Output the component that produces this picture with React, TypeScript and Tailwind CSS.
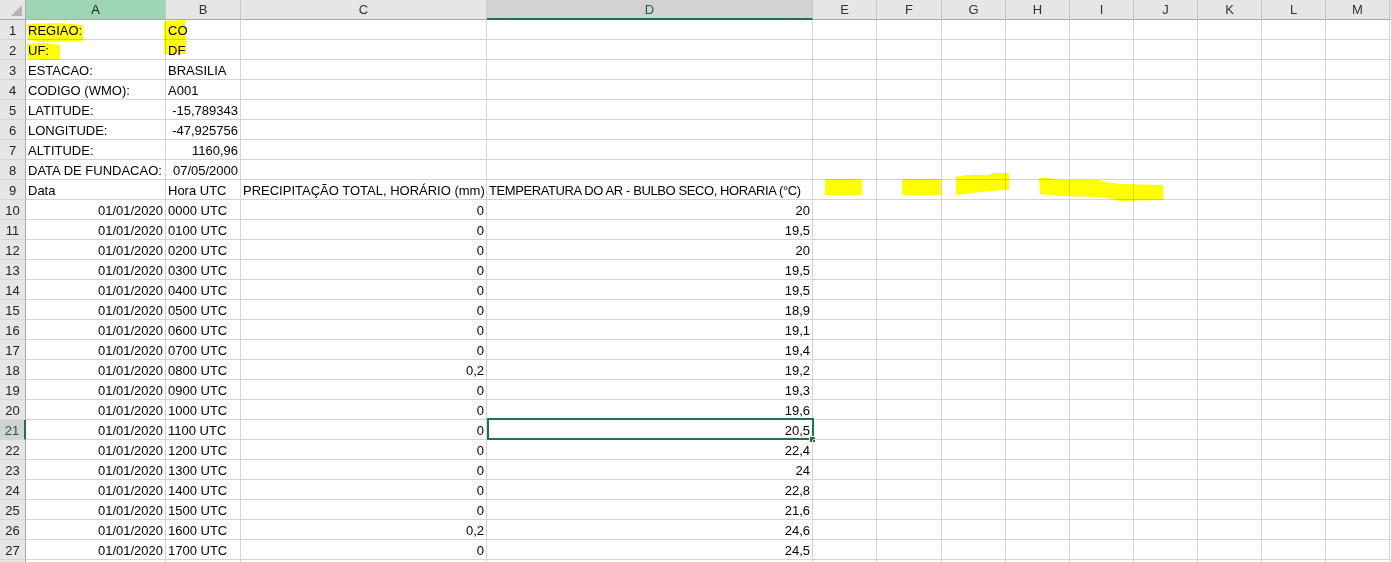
import React from "react";

const cols = ["A", "B", "C", "D", "E", "F", "G", "H", "I", "J", "K", "L", "M"];

type Cell = { t?: string; r?: boolean; s?: string };

const meta: [Cell, Cell][] = [
  [{ t: "REGIAO:" }, { t: "CO" }],
  [{ t: "UF:" }, { t: "DF" }],
  [{ t: "ESTACAO:" }, { t: "BRASILIA" }],
  [{ t: "CODIGO (WMO):" }, { t: "A001" }],
  [{ t: "LATITUDE:" }, { t: "-15,789343", r: true }],
  [{ t: "LONGITUDE:" }, { t: "-47,925756", r: true }],
  [{ t: "ALTITUDE:" }, { t: "1160,96", r: true }],
  [{ t: "DATA DE FUNDACAO:" }, { t: "07/05/2000", r: true }],
];

const data: [string, string, string][] = [
  ["0000", "0", "20"],
  ["0100", "0", "19,5"],
  ["0200", "0", "20"],
  ["0300", "0", "19,5"],
  ["0400", "0", "19,5"],
  ["0500", "0", "18,9"],
  ["0600", "0", "19,1"],
  ["0700", "0", "19,4"],
  ["0800", "0,2", "19,2"],
  ["0900", "0", "19,3"],
  ["1000", "0", "19,6"],
  ["1100", "0", "20,5"],
  ["1200", "0", "22,4"],
  ["1300", "0", "24"],
  ["1400", "0", "22,8"],
  ["1500", "0", "21,6"],
  ["1600", "0,2", "24,6"],
  ["1700", "0", "24,5"],
];

function buildRows(): Cell[][] {
  const rows: Cell[][] = [];
  meta.forEach(([a, b]) => rows.push([a, b]));
  rows.push([
    { t: "Data" },
    { t: "Hora UTC" },
    { t: "PRECIPITAÇÃO TOTAL, HORÁRIO (mm)" },
    { t: "TEMPERATURA DO AR - BULBO SECO, HORARIA (°C)", s: "tracking-[-0.4px]" },
  ]);
  data.forEach(([h, p, t]) =>
    rows.push([{ t: "01/01/2020", r: true }, { t: `${h} UTC` }, { t: p, r: true }, { t, r: true }])
  );
  return rows;
}

export default function App() {
  const rows = buildRows();
  return (
    <div
      className="relative w-[1391px] h-[562px] overflow-hidden bg-white text-[13px] text-black"
      style={{ fontFamily: '"Liberation Sans", Arial, sans-serif' }}
    >
      <div className="grid grid-cols-[26px_140px_75px_246px_326px_64px_65px_64px_64px_64px_64px_64px_64px_64px_1fr]">
        {/* header row */}
        <div className="h-[20px] bg-[#e6e6e6] border-r border-b border-[#ababab] relative">
          <div className="absolute right-[3px] bottom-[3px] w-0 h-0 border-l-[11px] border-l-transparent border-b-[11px] border-b-[#b4b4b4]" />
        </div>
        {cols.map((c) => {
          const sel = c === "D";
          const green = c === "A";
          return (
            <div
              key={c}
              className={
                "h-[20px] flex justify-center border-r leading-[19px] " +
                (sel
                  ? "bg-[#d2d2d2] border-[#c6c6c6] border-b-2 border-b-[#217346] text-[#1e5e3a]"
                  : green
                  ? "bg-[#9fd5b7] border-[#c6c6c6] border-b border-b-[#ababab] text-[#222]"
                  : "bg-[#e6e6e6] border-[#c6c6c6] border-b border-b-[#ababab] text-[#333]")
              }
            >
              {c}
            </div>
          );
        })}
        <div className="h-[20px] bg-[#e6e6e6] border-b border-[#ababab]" />

        {rows.map((row, i) => {
          const n = i + 1;
          const selRow = n === 21;
          return (
            <React.Fragment key={n}>
              <div
                className={
                  "h-[20px] flex justify-center pt-[3px] leading-[16px] border-b border-[#d4d4d4] " +
                  (selRow
                    ? "bg-[#d2d2d2] border-r-2 border-r-[#217346] text-[#1e5e3a]"
                    : "bg-[#e6e6e6] border-r border-r-[#ababab] text-[#222]")
                }
              >
                {n}
              </div>
              {cols.map((c, ci) => {
                const cell = row[ci];
                const isSel = selRow && c === "D";
                return (
                  <div
                    key={c}
                    className={
                      "relative h-[20px] border-r border-b border-[#d4d4d4] pt-[3px] leading-[16px] whitespace-nowrap " +
                      (cell?.r ? "flex justify-end pr-[2px] pl-[2px] " : "pl-[2px] ") +
                      (cell?.s ?? "")
                    }
                  >
                    {cell?.t}
                    {isSel && (
                      <>
                        <div className="absolute -top-[2px] left-0 -right-[2px] -bottom-[1px] border-2 border-[#217346] pointer-events-none" />
                        <div className="absolute -right-[4px] -bottom-[4px] w-[7px] h-[7px] bg-[#217346] border border-white" />
                      </>
                    )}
                  </div>
                );
              })}
              <div className="h-[20px] border-b border-[#d4d4d4]" />
            </React.Fragment>
          );
        })}

        {/* partially visible row 28 */}
        <div className="h-[20px] bg-[#e6e6e6] border-r border-r-[#ababab]" />
        {cols.map((c) => (
          <div key={c} className="h-[20px] border-r border-[#d4d4d4]" />
        ))}
        <div className="h-[20px]" />
      </div>

      {/* highlighter marks */}
      <svg
        className="absolute inset-0 pointer-events-none mix-blend-multiply"
        width="1391"
        height="562"
        viewBox="0 0 1391 562"
      >
        <g fill="#ffff00">
          <path d="M27 24 L60 23 L83 25 L83 41 L40 42 L28 40 Z" />
          <path d="M27 44 L45 43 L60 45 L60 60 L28 59 Z" />
          <path d="M164 21 L185 20 L185 36 L164 37 Z" />
          <path d="M164 35 L186 35 L186 54 L164 54 Z" />
          <rect x="825" y="179" width="37" height="16" />
          <rect x="902" y="179" width="39" height="16" />
          <path d="M956 177 L966 175 L990 175 L992 173 L1009 173 L1009 190 L990 191 L972 193 L958 195 L956 195 Z" />
          <path d="M1039 178 L1050 178 L1058 180 L1100 180 L1105 182 L1120 184 L1163 185 L1163 200 L1120 201 L1113 199 L1100 197 L1060 196 L1040 194 Z" />
        </g>
      </svg>
    </div>
  );
}
